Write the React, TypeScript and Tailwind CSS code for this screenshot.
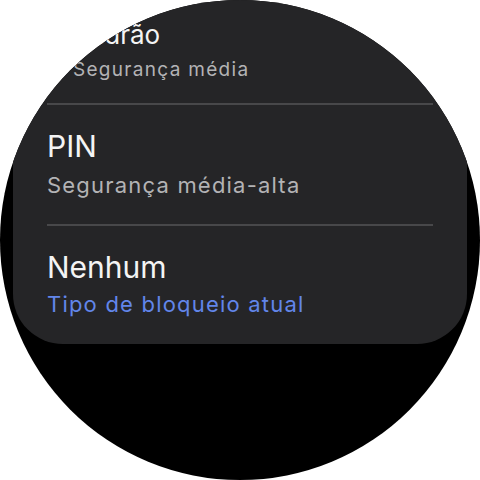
import React from "react";

export default function App() {
  const divider = <div className="h-[2px] bg-[#48484a]" />;
  return (
    <div className="w-[480px] h-[480px] bg-white" style={{ fontFamily: "Inter, Roboto, sans-serif" }}>
      <div className="w-[480px] h-[480px] rounded-full bg-black overflow-hidden flex flex-col items-center">
        <div className="w-[454px] -mt-[8px] bg-[#252527] rounded-b-[50px] px-[34px] shrink-0">
          <div className="pt-[27px] pb-[21px] px-[26px]">
            <div className="text-[26px] leading-[31px] text-[#f4f4f4]">Padrão</div>
            <div className="mt-[8px] text-[19px] leading-[24px] tracking-[1.3px] text-[#b3b3b5]">Segurança média</div>
          </div>
          {divider}
          <div className="pt-[23px] pb-[25px]">
            <div className="text-[30px] leading-[36px] text-[#f4f4f4]">PIN</div>
            <div className="mt-[7px] text-[22px] leading-[28px] tracking-[1.2px] text-[#b3b3b5]">Segurança média-alta</div>
          </div>
          {divider}
          <div className="pt-[23px] pb-[26px]">
            <div className="text-[30px] leading-[36px] text-[#f4f4f4]">Nenhum</div>
            <div className="mt-[5px] text-[22px] leading-[28px] tracking-[1.2px] text-[#6286ea]">Tipo de bloqueio atual</div>
          </div>
        </div>
      </div>
    </div>
  );
}
